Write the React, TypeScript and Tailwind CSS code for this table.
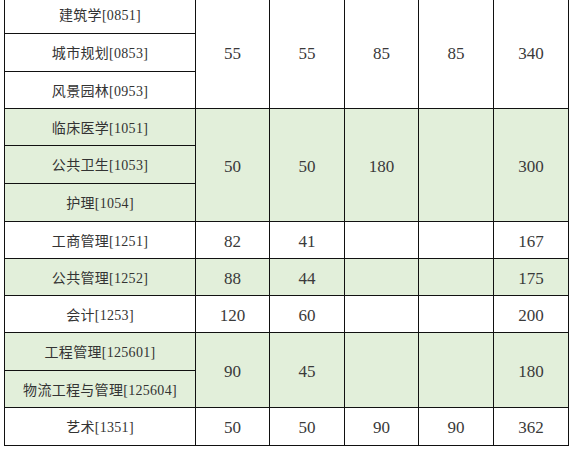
import React from "react";

const G = "bg-[#e2efda]";

const names: { t: string; g: boolean }[] = [
  { t: "建筑学[0851]", g: false },
  { t: "城市规划[0853]", g: false },
  { t: "风景园林[0953]", g: false },
  { t: "临床医学[1051]", g: true },
  { t: "公共卫生[1053]", g: true },
  { t: "护理[1054]", g: true },
  { t: "工商管理[1251]", g: false },
  { t: "公共管理[1252]", g: true },
  { t: "会计[1253]", g: false },
  { t: "工程管理[125601]", g: true },
  { t: "物流工程与管理[125604]", g: true },
  { t: "艺术[1351]", g: false },
];

const groups: { span: string; start: string; g: boolean; vals: string[] }[] = [
  { span: "row-span-3", start: "row-start-1", g: false, vals: ["55", "55", "85", "85", "340"] },
  { span: "row-span-3", start: "row-start-4", g: true, vals: ["50", "50", "180", "", "300"] },
  { span: "row-span-1", start: "row-start-7", g: false, vals: ["82", "41", "", "", "167"] },
  { span: "row-span-1", start: "row-start-8", g: true, vals: ["88", "44", "", "", "175"] },
  { span: "row-span-1", start: "row-start-9", g: false, vals: ["120", "60", "", "", "200"] },
  { span: "row-span-2", start: "row-start-10", g: true, vals: ["90", "45", "", "", "180"] },
  { span: "row-span-1", start: "row-start-12", g: false, vals: ["50", "50", "90", "90", "362"] },
];

const colStarts = ["col-start-2", "col-start-3", "col-start-4", "col-start-5", "col-start-6"];
const rowStarts = [
  "row-start-1", "row-start-2", "row-start-3", "row-start-4", "row-start-5", "row-start-6",
  "row-start-7", "row-start-8", "row-start-9", "row-start-10", "row-start-11", "row-start-12",
];

export default function App() {
  return (
    <div className="w-[575px] h-[454px] overflow-hidden bg-white">
      <div
        className="ml-[4px] mt-[-5px] w-fit p-px bg-[#111] grid gap-px grid-cols-[190px_73px_74px_73px_74px_74px] grid-rows-[37px_37px_36px_36px_37px_37px_36px_36px_36px_37px_36px_37px] text-[#333]"
        style={{ fontFamily: '"Liberation Serif", "Noto Sans CJK SC", serif' }}
      >
        {names.map((n, i) => (
          <div
            key={"n" + i}
            className={`col-start-1 ${rowStarts[i]} flex items-center justify-center pt-[2px] text-[14px] tracking-[0.3px] ${n.g ? G : "bg-white"}`}
          >
            {n.t}
          </div>
        ))}
        {groups.map((g, gi) =>
          g.vals.map((v, ci) => (
            <div
              key={"g" + gi + "-" + ci}
              className={`${colStarts[ci]} ${g.start} ${g.span} flex items-center justify-center pt-[3px] text-[17px] text-[#3a3a3a] ${g.g ? G : "bg-white"}`}
            >
              {v}
            </div>
          ))
        )}
      </div>
    </div>
  );
}
